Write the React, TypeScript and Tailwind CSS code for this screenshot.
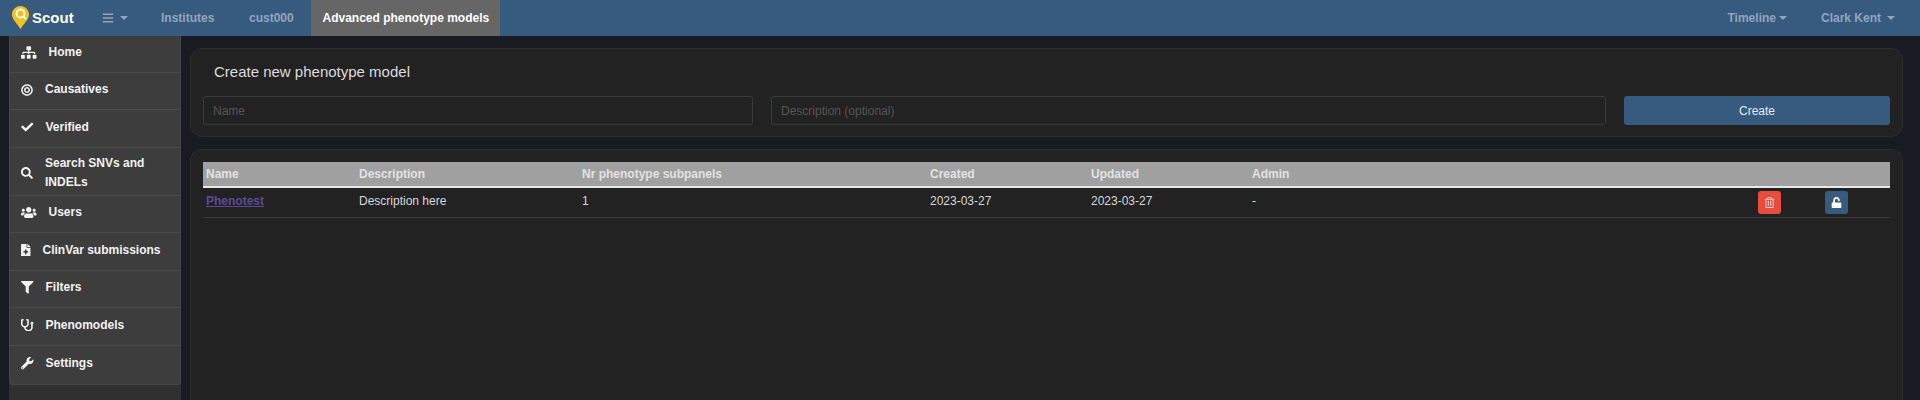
import React from "react";
import { FaSitemap, FaBullseye, FaCheck, FaSearch, FaUsers, FaFileMedical, FaFilter, FaStethoscope, FaWrench, FaBars, FaRegTrashAlt, FaUnlock } from "react-icons/fa";

const Caret = () => (
  <span className="inline-block w-0 h-0 border-x-[4px] border-x-transparent border-t-[4px] border-t-current align-[2px]" />
);

const items = [
  { Icon: FaSitemap, label: "Home", h: "h-[37px] pb-[3px]", icon: "w-[15.500px] h-[13px]" },
  { Icon: FaBullseye, label: "Causatives", h: "h-[37px] pb-[3px]", icon: "w-[12px] h-[12px]" },
  { Icon: FaCheck, label: "Verified", h: "h-[38px] pb-[3px]", icon: "w-[12.500px] h-[12px]" },
  { Icon: FaSearch, label: "Search SNVs and INDELs", h: "h-[48px] pt-[2px]", icon: "w-[12px] h-[12px]" },
  { Icon: FaUsers, label: "Users", h: "h-[37px] pb-[3px]", icon: "w-[15.500px] h-[13px]" },
  { Icon: FaFileMedical, label: "ClinVar submissions", h: "h-[38px] pb-[3px]", icon: "w-[9.500px] h-[12.500px]" },
  { Icon: FaFilter, label: "Filters", h: "h-[37px] pb-[3px]", icon: "w-[12.500px] h-[12.500px]" },
  { Icon: FaStethoscope, label: "Phenomodels", h: "h-[38px] pb-[3px]", icon: "w-[12.500px] h-[12.500px]" },
  { Icon: FaWrench, label: "Settings", h: "h-[38px] pb-[3px]", icon: "w-[12.500px] h-[12.500px]" },
];

export default function App() {
  return (
    <div className="h-[400px] overflow-hidden bg-[#1a1a22] font-['Liberation_Sans',Arial,sans-serif] text-[12px] text-[#dcdcdc]">
      <nav className="h-[36px] bg-[#375a7f] flex items-center text-[#8fa6c0] font-bold">
        <div className="flex items-center ml-[12px] w-[90px]">
          <svg width="17" height="23" viewBox="0 0 17 23" className="shrink-0 mt-[-1px]">
            <path d="M8.5 0C3.8 0 0 3.8 0 8.5 0 13.500 5.500 18 8.500 23 11.500 18 17 13.500 17 8.500 17 3.800 13.200 0 8.500 0Z" fill="#f4c020" />
            <circle cx="8.500" cy="7.500" r="4" fill="none" stroke="#fff" strokeWidth="1.800" />
            <path d="M11.500 10.500L14 13" stroke="#fff" strokeWidth="1.800" />
          </svg>
          <span className="ml-[3px] text-[15px] text-white">Scout</span>
        </div>
        <div className="flex items-center w-[59px]"><FaBars size={12} /><span className="ml-[6px] flex"><Caret /></span></div>
        <span className="w-[88px]">Institutes</span>
        <span className="w-[62px]">cust000</span>
        <span className="h-full w-[189px] pl-[11.500px] bg-[#666666] text-white flex items-center">Advanced phenotype models</span>
        <div className="ml-auto flex items-center">
          <span>Timeline<span className="ml-[3px]"><Caret /></span></span>
          <span className="ml-[34px] mr-[25px]">Clark Kent<span className="ml-[6px]"><Caret /></span></span>
        </div>
      </nav>
      <div className="flex h-[364px]">
        <aside className="ml-[9px] w-[172px] shrink-0 bg-[#303030] h-full">
          <ul className="bg-[#3d3d3d] rounded-b-[4px] border-x border-b border-[#464646] text-[#f2f2f2] font-bold">
            {items.map(({ Icon, label, h, icon }) => (
              <li key={label} className={`${h} flex items-center pl-[11px] border-b border-[#4a4a4a] last:border-b-0`}>
                <Icon className={`shrink-0 ${icon}`} />
                <span className={`ml-[12px] leading-[19px] ${label.startsWith("Search") ? "w-[115px]" : ""}`}>{label}</span>
              </li>
            ))}
          </ul>
        </aside>
        <main className="flex-1 ml-[9px] mr-[17px] pt-[12px] flex flex-col gap-[12px]">
          <section className="h-[89px] shrink-0 bg-[#222222] border border-[#2e2e2e] rounded-[12px] px-[12px]">
            <h2 className="mt-[14px] ml-[11px] text-[15px] leading-[18px] text-[#dcdcdc]">Create new phenotype model</h2>
            <div className="flex mt-[15px] gap-[18px]">
              <div className="w-[550px] h-[29px] border border-[#3a3a3a] rounded-[3px] px-[9px] flex items-center text-[#555555]">Name</div>
              <div className="w-[835px] h-[29px] border border-[#3a3a3a] rounded-[3px] px-[9px] flex items-center text-[#555555]">Description (optional)</div>
              <button className="flex-1 h-[29px] bg-[#375a7f] rounded-[3px] text-[#e4e9ef]">Create</button>
            </div>
          </section>
          <section className="flex-1 bg-[#222222] border border-[#2e2e2e] rounded-t-[12px] border-b-0 px-[12px] pt-[12px]">
            <table className="w-full table-fixed border-collapse text-left">
              <colgroup>
                <col className="w-[153px]" /><col className="w-[223px]" /><col className="w-[348px]" /><col className="w-[161px]" /><col className="w-[161px]" /><col className="w-[506px]" /><col className="w-[67px]" /><col />
              </colgroup>
              <thead>
                <tr className="h-[25px] bg-[#a0a0a0] text-[#e2e2e2] border-b-2 border-[#e8e8e8]">
                  {["Name", "Description", "Nr phenotype subpanels", "Created", "Updated", "Admin", "", ""].map((t, i) => (
                    <th key={i} className="px-[3px] font-bold">{t}</th>
                  ))}
                </tr>
              </thead>
              <tbody>
                <tr className="h-[30px] border-b border-[#3a3a3a] text-[#d8d8d8]">
                  <td className="px-[3px] pb-[3px]"><a className="font-bold underline text-[#5a4a9a]">Phenotest</a></td>
                  <td className="px-[3px] pb-[3px]">Description here</td>
                  <td className="px-[3px] pb-[3px]">1</td>
                  <td className="px-[3px] pb-[3px]">2023-03-27</td>
                  <td className="px-[3px] pb-[3px]">2023-03-27</td>
                  <td className="px-[3px] pb-[3px]">-</td>
                  <td className="px-[3px]"><span className="w-[23px] h-[23px] bg-[#e74c3c] rounded-[3px] flex items-center justify-center text-[#f8d0cc]"><FaRegTrashAlt size={11} /></span></td>
                  <td className="px-[3px]"><span className="w-[23px] h-[23px] bg-[#375a7f] rounded-[3px] flex items-center justify-center text-white"><FaUnlock size={11} /></span></td>
                </tr>
              </tbody>
            </table>
          </section>
        </main>
      </div>
    </div>
  );
}
